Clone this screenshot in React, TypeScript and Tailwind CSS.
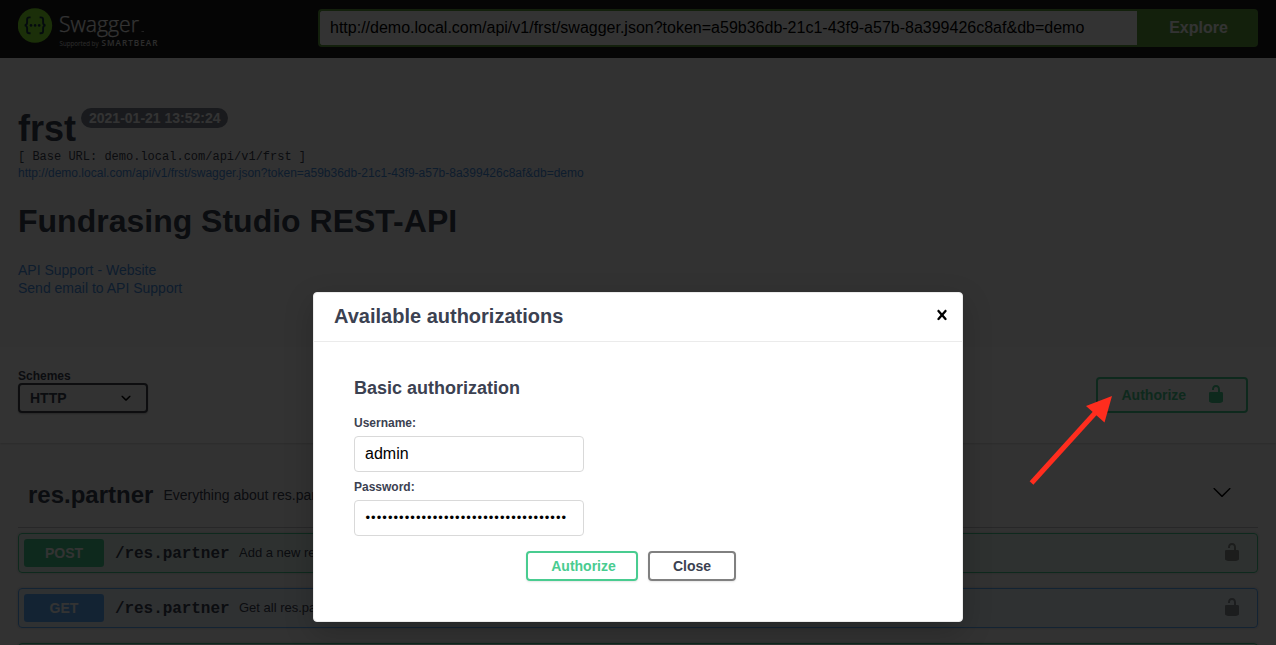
import React from "react";

const UNLOCK =
  "M15.8 8H14V5.6C14 2.703 12.665 1 10 1 7.334 1 6 2.703 6 5.6V6h2v-.801C8 3.754 8.797 3 10 3c1.203 0 2 .754 2 2.199V8H4c-.553 0-1 .646-1 1.199V17c0 .549.428 1.139.951 1.307l1.197.387C5.672 18.861 6.55 19 7.1 19h5.8c.549 0 1.428-.139 1.951-.307l1.196-.387c.524-.167.953-.757.953-1.306V9.199C17 8.646 16.352 8 15.8 8z";
const CLOSE =
  "M14.348 14.849c-.469.469-1.229.469-1.697 0L10 11.819l-2.651 3.029c-.469.469-1.229.469-1.697 0-.469-.469-.469-1.229 0-1.697l2.758-3.15-2.759-3.152c-.469-.469-.469-1.228 0-1.697.469-.469 1.228-.469 1.697 0L10 8.183l2.651-3.031c.469-.469 1.228-.469 1.697 0 .469.469.469 1.229 0 1.697l-2.758 3.152 2.758 3.15c.469.469.469 1.229 0 1.698z";
const LARGE_ARROW =
  "M17.418 6.109c.272-.268.709-.268.979 0s.271.701 0 .969l-7.908 7.83c-.27.268-.707.268-.979 0l-7.908-7.83c-.27-.268-.27-.701 0-.969.271-.268.709-.268.979 0L10 13.25l7.418-7.141z";
const SMALL_ARROW =
  "M13.418 7.859c.271-.268.709-.268.978 0 .27.268.272.701 0 .969l-3.908 3.83c-.27.268-.707.268-.979 0l-3.908-3.83c-.27-.267-.27-.701 0-.969.271-.268.709-.268.978 0L10 11l3.418-3.141z";

const URL = "http://demo.local.com/api/v1/frst/swagger.json?token=a59b36db-21c1-43f9-a57b-8a399426c8af&db=demo";

function Icon({ d, className = "" }: { d: string; className?: string }) {
  return (
    <svg viewBox="0 0 20 20" className={`h-5 w-5 shrink-0 fill-current ${className}`}>
      <path d={d} />
    </svg>
  );
}

function Logo() {
  return (
    <svg viewBox="0 0 150 58" className="h-[58px] w-[150px] shrink-0">
      <circle cx="17" cy="25.5" r="17.2" fill="#85ea2d" />
      <g fill="none" stroke="#173647" strokeWidth="1.9">
        <path d="M12.6 17.4h-1.3c-1.6 0-2.2.8-2.2 2.3v2.9c0 1.7-.8 2.6-2.4 2.8 1.6.2 2.4 1.1 2.4 2.8v2.7c0 1.5.6 2.3 2.2 2.3h1.3" />
        <path d="M21.6 17.4h1.3c1.6 0 2.2.8 2.2 2.3v2.9c0 1.7.8 2.6 2.4 2.8-1.6.2-2.4 1.1-2.4 2.8v2.7c0 1.5-.6 2.3-2.2 2.3h-1.3" />
      </g>
      <g fill="#173647">
        <circle cx="13" cy="25.4" r="1.3" />
        <circle cx="17.1" cy="25.4" r="1.3" />
        <circle cx="21.2" cy="25.4" r="1.3" />
      </g>
      <g fill="#fff" fontFamily="'Open Sans', sans-serif">
        <text x="41" y="32" fontSize="21.5" fontWeight="300" stroke="#fff" strokeWidth="0.25" textLength="80" lengthAdjust="spacingAndGlyphs">
          Swagger
        </text>
        <text x="41.5" y="46" fontSize="6.2" textLength="39" opacity="0.8">Supported by</text>
        <text x="83.5" y="46" fontSize="8.2" fontWeight="600" textLength="56" opacity="0.85">SMARTBEAR</text>
      </g>
      <path d="M123.5 31.5h2.5" stroke="#fff" strokeWidth="1" opacity="0.6" />
    </svg>
  );
}

function Operation({ kind, summary }: { kind: "POST" | "GET"; summary: string }) {
  const post = kind === "POST";
  return (
    <div
      className={`flex h-10 items-center rounded border pr-[15px] pl-[5px] shadow-[0_0_3px_rgba(0,0,0,0.19)] ${
        post ? "border-[#49cc90] bg-[#49cc90]/10" : "border-[#61affe] bg-[#61affe]/10"
      }`}
    >
      <span
        className={`flex h-7 w-20 items-center justify-center rounded-[3px] text-sm font-bold text-white ${
          post ? "bg-[#49cc90]" : "bg-[#61affe]"
        }`}
      >
        {kind}
      </span>
      <span className="ml-[11px] w-[124px] pt-px font-['Liberation_Mono'] text-base font-bold tracking-[-0.06px]">
        /res.partner
      </span>
      <span className="flex-1 text-[13px]">{summary}</span>
      <Icon d={UNLOCK} className="mb-[3px] text-black opacity-40" />
    </div>
  );
}

function Page() {
  return (
    <div className="flex flex-col">
      <header className="flex h-[58px] items-start justify-between bg-[#1b1b1b] px-[18px]">
        <Logo />
        <div className="mt-[9px] flex h-[38px] w-[940px]">
          <div className="flex flex-1 items-center overflow-hidden rounded-l border-2 border-r-0 border-[#62a03f] bg-white pl-[10px] text-base whitespace-nowrap text-black">
            {URL}
          </div>
          <div className="flex w-[121px] items-center justify-center rounded-r bg-[#62a03f] pl-[2px] text-base font-bold text-white">
            Explore
          </div>
        </div>
      </header>

      <section className="flex h-[289px] flex-col px-[18px] pt-[50px]">
        <div className="flex h-[42px] items-start">
          <h1 className="text-[36px] leading-[42px] font-bold">frst</h1>
          <span className="ml-[5px] flex h-5 items-center rounded-full bg-[#7d8492] pr-[7px] pl-2 text-sm font-bold whitespace-nowrap text-white">
            2021-01-21 13:52:24
          </span>
        </div>
        <div className="h-4 font-['Liberation_Mono'] text-xs leading-[14px] whitespace-nowrap">
          [ Base URL: demo.local.com/api/v1/frst ]
        </div>
        <a className="h-4 text-xs leading-[15px] text-[#4990e2]">{URL}</a>
        <h2 className="mt-[19px] h-10 text-[32px] leading-10 font-bold">Fundrasing Studio REST-API</h2>
        <a className="mt-5 text-sm leading-[18px] text-[#4990e2]">API Support - Website</a>
        <a className="text-sm leading-[18px] text-[#4990e2]">Send email to API Support</a>
      </section>

      <section className="flex h-[96px] items-start justify-between bg-white px-[18px] shadow-[0_1px_2px_rgba(0,0,0,0.15)]">
        <div className="flex flex-col pt-[22px]">
          <span className="text-xs leading-[14px] font-bold">Schemes</span>
          <div className="flex h-[30px] w-[130px] items-center justify-between rounded border-2 border-[#41444e] bg-[#f7f7f7] pr-[10px] pl-[10px] text-sm font-bold shadow-[0_1px_2px_rgba(0,0,0,0.25)]">
            HTTP
            <Icon d={SMALL_ARROW} className="text-black" />
          </div>
        </div>
        <div className="mt-[30px] mr-[10px] flex h-9 w-[152px] items-center rounded border-2 border-[#49cc90] pr-5 pl-[23.5px] text-sm font-bold text-[#49cc90]">
          <span className="flex-1">Authorize</span>
          <Icon d={UNLOCK} className="mb-[3px]" />
        </div>
      </section>

      <main className="px-[18px] pt-[17px]">
        <div className="flex h-[68px] items-center border-b border-[#3b4151]/30 pr-[26px] pl-[10px]">
          <span className="pt-[2px] text-2xl font-bold">res.partner</span>
          <span className="flex-1 pt-[2px] pl-[10px] text-sm">Everything about res.partner</span>
          <Icon d={LARGE_ARROW} className="mt-[-4px] text-black" />
        </div>
        <div className="flex flex-col gap-[15px] pt-[5px]">
          <Operation kind="POST" summary="Add a new res.partner" />
          <Operation kind="GET" summary="Get all res.partner" />
          <div className="h-10 rounded border border-[#49cc90] bg-[#49cc90]/10 shadow-[0_0_3px_rgba(0,0,0,0.19)]" />
        </div>
      </main>
    </div>
  );
}

function AuthDialog() {
  return (
    <div
      role="dialog"
      className="absolute top-[292px] left-[313px] flex h-[330px] w-[650px] flex-col rounded border border-[#ebebeb] bg-white shadow-[0_10px_30px_rgba(0,0,0,0.2)]"
    >
      <div className="flex h-[49px] items-center justify-between border-b border-[#ebebeb] pr-[10px] pl-5">
        <h3 className="pb-[2px] text-xl font-bold">Available authorizations</h3>
        <Icon d={CLOSE} className="mb-[5px] text-black" />
      </div>
      <div className="flex flex-col px-10 pt-[34px]">
        <h4 className="h-6 text-lg leading-6 font-bold">Basic authorization</h4>
        <label className="mt-[15px] h-4 text-xs leading-4 font-bold">Username:</label>
        <div className="mt-[5px] flex h-9 w-[230px] items-center rounded border border-[#d9d9d9] px-[10px] text-base text-black">
          admin
        </div>
        <label className="mt-[7px] h-4 text-xs leading-4 font-bold">Password:</label>
        <div className="mt-[5px] flex h-9 w-[230px] items-center rounded border border-[#d9d9d9] px-[10.5px] pb-px text-[13px] tracking-[1.05px] text-black">
          {"•".repeat(36)}
        </div>
        <div className="mt-[15px] flex gap-[10px] pl-[172px]">
          <div className="flex h-[30px] w-28 items-center justify-center rounded border-2 border-[#49cc90] pl-[3px] text-sm font-bold text-[#49cc90] shadow-[0_1px_2px_rgba(0,0,0,0.1)]">
            Authorize
          </div>
          <div className="flex h-[30px] w-[88px] items-center justify-center rounded border-2 border-[#808080] text-sm font-bold shadow-[0_1px_2px_rgba(0,0,0,0.1)]">
            Close
          </div>
        </div>
      </div>
    </div>
  );
}

export default function App() {
  return (
    <div className="relative h-[645px] w-[1276px] overflow-hidden bg-[#fafafa] font-['Liberation_Sans',Arial,sans-serif] text-[#3b4151]">
      <Page />
      <div className="absolute inset-0 bg-black/80" />
      <AuthDialog />
      <svg viewBox="0 0 90 95" className="absolute top-[393px] left-[1025px] h-[95px] w-[90px]">
        <path d="M6.5 90 70.5 19.5" stroke="#ff2d1e" strokeWidth="5" />
        <path d="M87 3 61 13 79.5 29.5z" fill="#ff2d1e" />
      </svg>
    </div>
  );
}
